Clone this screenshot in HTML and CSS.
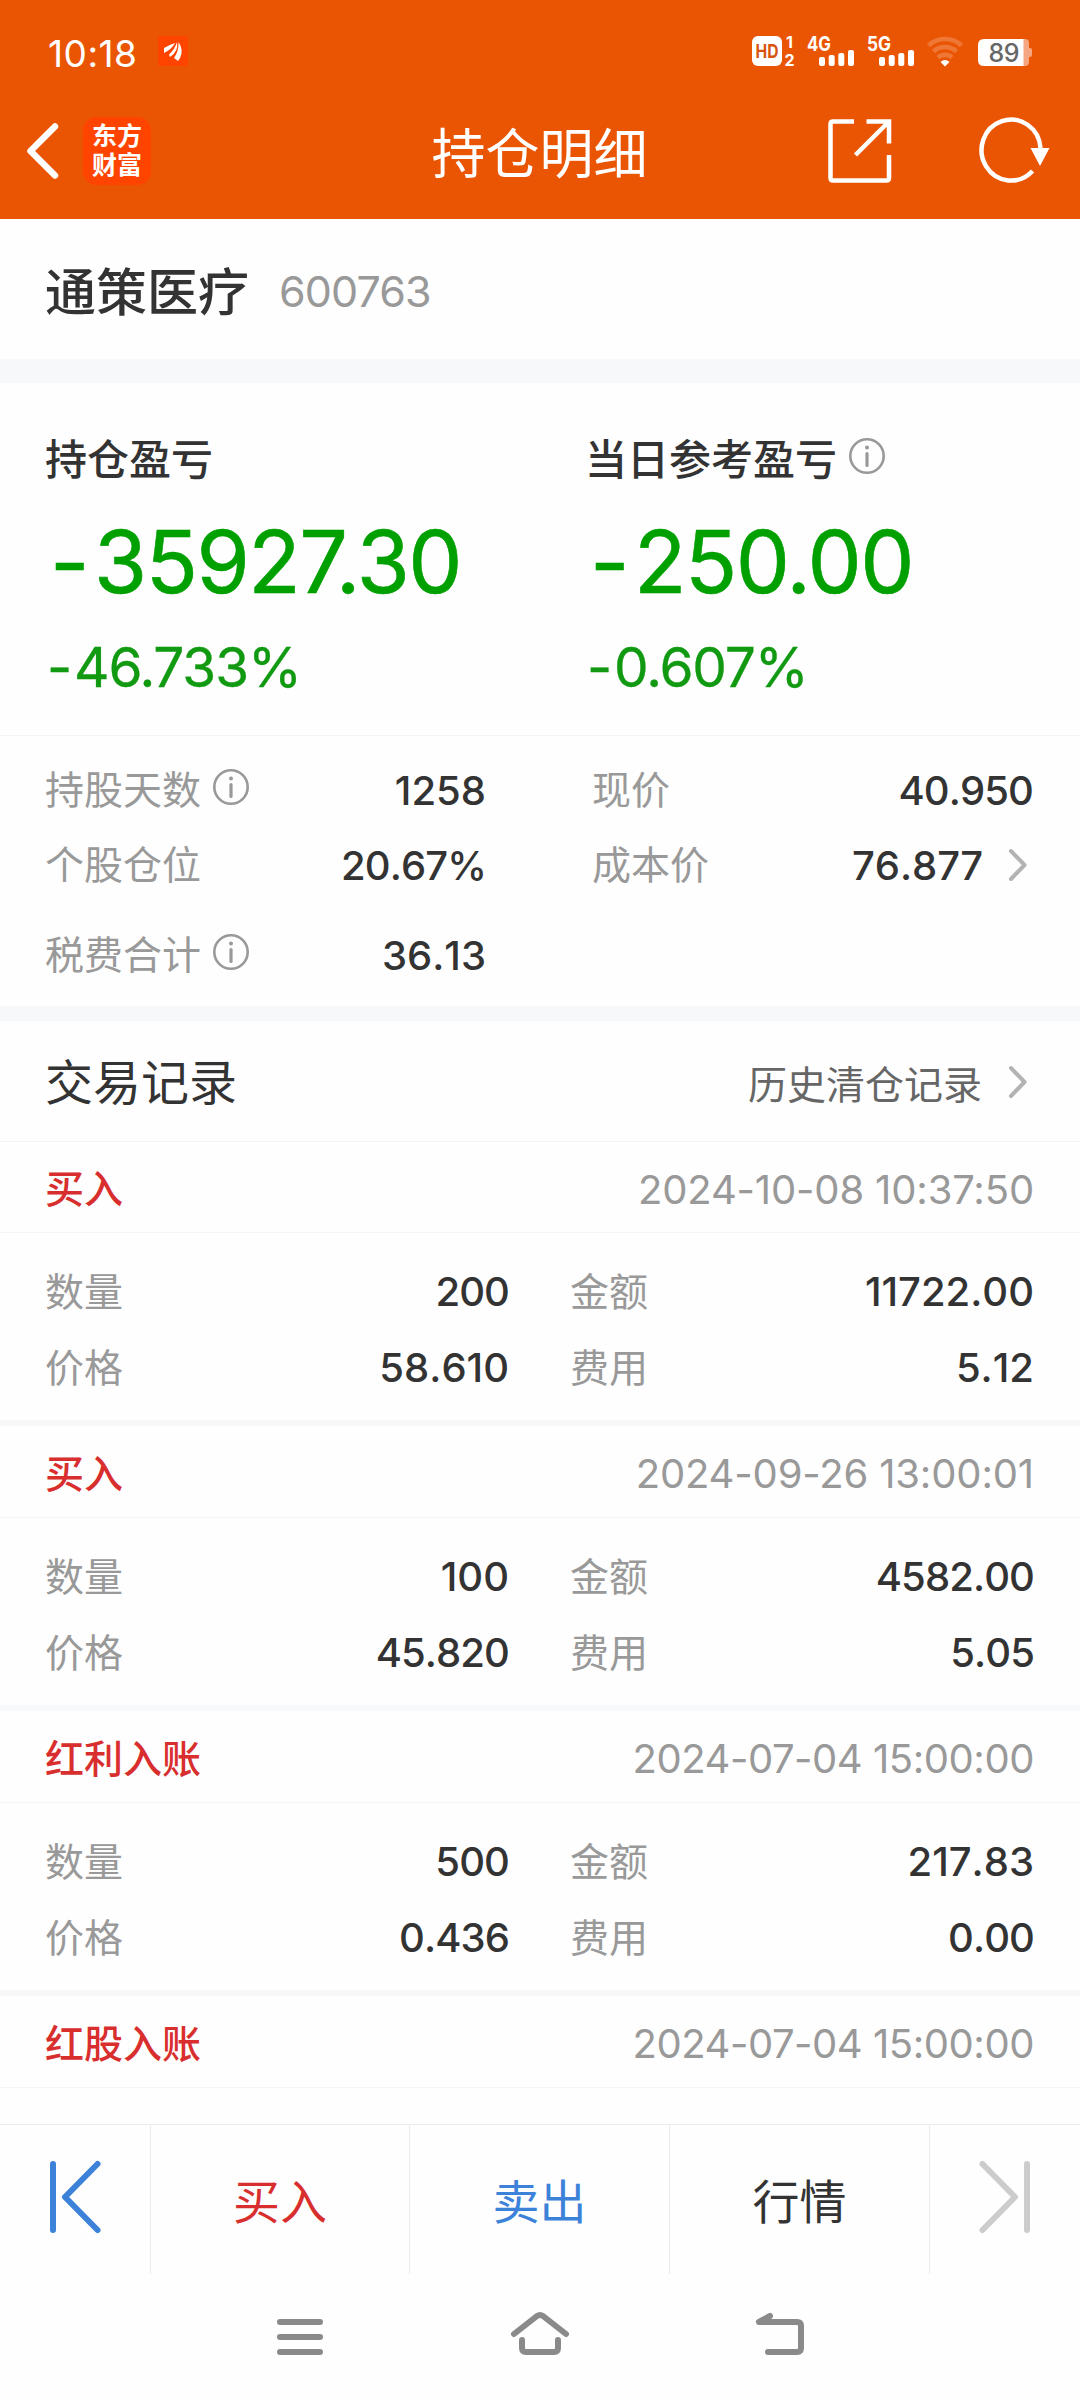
FILE: index.html
```html
<!DOCTYPE html>
<html lang="zh-CN">
<head>
<meta charset="utf-8">
<title>持仓明细</title>
<link rel="stylesheet" href="styles.css">
</head>
<body>
<div class="screen">
  <header class="top">
    <div class="status">
      <span class="clock">10:18</span>
      <svg class="app-dot" width="30" height="30" viewBox="0 0 30 30"><rect width="30" height="30" rx="3" fill="#ff4400"/><g fill="#fff"><path d="M6 12Q11 9 17 7Q14 13 6 17z"/><path d="M11 18.500Q17 13 19 6Q21 15 12 21z"/><path d="M16 22Q21 15 20.500 6Q26 14 22 22L20 25z"/></g></svg>
      <div class="status-right">
        <svg width="43" height="30" viewBox="0 0 43 30">
          <rect width="30" height="30" rx="6" fill="#fff"/>
          <text x="15" y="22" text-anchor="middle" textLength="23" lengthAdjust="spacingAndGlyphs" class="hd">HD</text>
          <text x="37.500" y="12" text-anchor="middle" class="tiny">1</text>
          <text x="37.500" y="29.500" text-anchor="middle" class="tiny">2</text>
        </svg>
        <svg class="sig" width="48" height="30" viewBox="0 0 48 30">
          <text x="0" y="15" textLength="24" lengthAdjust="spacingAndGlyphs" class="net">4G</text>
          <g fill="#fff"><rect x="12" y="21" width="6" height="9" rx="2"/><rect x="21.700" y="19" width="6" height="11" rx="2"/><rect x="31.300" y="17" width="6" height="13" rx="2"/><rect x="41" y="14" width="6" height="16" rx="2"/></g>
        </svg>
        <svg class="sig" width="48" height="30" viewBox="0 0 48 30">
          <text x="0" y="15" textLength="24" lengthAdjust="spacingAndGlyphs" class="net">5G</text>
          <g fill="#fff"><rect x="12" y="21" width="6" height="9" rx="2"/><rect x="21.700" y="19" width="6" height="11" rx="2"/><rect x="31.300" y="17" width="6" height="13" rx="2"/><rect x="41" y="14" width="6" height="16" rx="2"/></g>
        </svg>
        <svg class="wifi" width="36" height="30" viewBox="0 0 36 30">
          <g fill="none" stroke="#fff" stroke-opacity=".2" stroke-width="4.500"><path d="M1.500 9.500a24 24 0 0 1 33 0"/><path d="M6.500 15.500a17 17 0 0 1 23 0"/><path d="M11 21.500a10.500 10.500 0 0 1 14 0"/></g>
          <path d="M13.500 26q4.500-4 9 0L18 30.500z" fill="#fff"/>
        </svg>
        <svg class="batt" width="54" height="30" viewBox="0 0 54 30">
          <path d="M45 3h2q4 0 4 4v5h1q2 0 2 2v5q0 2-2 2h-1v5q0 4-4 4h-2z" fill="#f5a680"/>
          <path d="M6 3h39.500v27H6q-6 0-6-6V9q0-6 6-6z" fill="#fff"/>
          <text x="26" y="26" text-anchor="middle" textLength="31" class="level">89</text>
        </svg>
      </div>
    </div>
    <nav class="titlebar">
      <div class="title-left">
        <svg width="34" height="58" viewBox="0 0 34 58"><path d="M29 4.500L4.500 29L29 53.500" fill="none" stroke="#fff" stroke-width="6.500" stroke-linecap="round" stroke-linejoin="round"/></svg>
        <div class="brand"><span>东方</span><span>财富</span></div>
      </div>
      <h1>持仓明细</h1>
      <div class="title-right">
        <svg width="64" height="64" viewBox="0 0 64 64"><g fill="none" stroke="#fff" stroke-width="4.500"><path d="M26 2.500H5Q2.500 2.500 2.500 5V59Q2.500 61.500 5 61.500H58.500Q61 61.500 61 59V36"/><path d="M38.500 2.500H61V24.500M60 3.500L27.500 36"/></g></svg>
        <svg width="71" height="66" viewBox="0 0 71 66"><path d="M61.500 30A29.500 30.500 0 1 0 53.500 53" fill="none" stroke="#fff" stroke-width="4.500"/><path d="M51.500 30H70.500L61 48z" fill="#fff"/></svg>
      </div>
    </nav>
  </header>

  <section class="stock"><span class="stock-name">通策医疗</span><span class="stock-code">600763</span></section>

  <section class="pnl">
    <div class="pnl-col">
      <div class="pnl-label">持仓盈亏</div>
      <div class="pnl-big"><span class="sign">-</span>35927.30</div>
      <div class="pnl-pct"><span class="sign">-</span>46.733%</div>
    </div>
    <div class="pnl-col">
      <div class="pnl-label">当日参考盈亏<svg class="info" viewBox="0 0 36 36"><circle cx="18" cy="18" r="16.700"/><path d="M18 15.500V27.500"/><circle class="dot" cx="18" cy="9.500" r="2"/></svg></div>
      <div class="pnl-big"><span class="sign">-</span>250.00</div>
      <div class="pnl-pct"><span class="sign">-</span>0.607%</div>
    </div>
  </section>

  <section class="stats">
    <div class="stat"><span class="k">持股天数<svg class="info" viewBox="0 0 36 36"><circle cx="18" cy="18" r="16.700"/><path d="M18 15.500V27.500"/><circle class="dot" cx="18" cy="9.500" r="2"/></svg></span><span class="v loose">1258</span></div>
    <div class="stat"><span class="k">现价</span><span class="v">40.950</span></div>
    <div class="stat"><span class="k">个股仓位</span><span class="v">20.67%</span></div>
    <div class="stat"><span class="k">成本价</span><span class="v loose">76.877<svg class="chev" viewBox="0 0 20 34"><path d="M3 3L16.500 17L3 31"/></svg></span></div>
    <div class="stat last"><span class="k">税费合计<svg class="info" viewBox="0 0 36 36"><circle cx="18" cy="18" r="16.700"/><path d="M18 15.500V27.500"/><circle class="dot" cx="18" cy="9.500" r="2"/></svg></span><span class="v loose">36.13</span></div>
  </section>

  <section class="records">
    <div class="rec-title"><h2>交易记录</h2><span class="history">历史清仓记录<svg class="chev" viewBox="0 0 20 34"><path d="M3 3L16.500 17L3 31"/></svg></span></div>

    <article class="rec">
      <div class="rec-head"><b>买入</b><time>2024-10-08 10:37:50</time></div>
      <div class="rec-body">
        <span class="k">数量</span><span class="v">200</span><span class="k">金额</span><span class="v loose">11722.00</span>
        <span class="k">价格</span><span class="v loose">58.610</span><span class="k">费用</span><span class="v loose">5.12</span>
      </div>
    </article>
    <article class="rec">
      <div class="rec-head"><b>买入</b><time>2024-09-26 13:00:01</time></div>
      <div class="rec-body">
        <span class="k">数量</span><span class="v loose">100</span><span class="k">金额</span><span class="v">4582.00</span>
        <span class="k">价格</span><span class="v">45.820</span><span class="k">费用</span><span class="v">5.05</span>
      </div>
    </article>
    <article class="rec">
      <div class="rec-head"><b>红利入账</b><time class="tight">2024-07-04 15:00:00</time></div>
      <div class="rec-body">
        <span class="k">数量</span><span class="v">500</span><span class="k">金额</span><span class="v loose">217.83</span>
        <span class="k">价格</span><span class="v">0.436</span><span class="k">费用</span><span class="v">0.00</span>
      </div>
    </article>
    <article class="rec">
      <div class="rec-head"><b>红股入账</b><time class="tight">2024-07-04 15:00:00</time></div>
    </article>
  </section>

  <footer class="actions">
    <div class="act"><svg width="52" height="74" viewBox="0 0 52 74"><path d="M4 4V70M48.500 4L16 37L48.500 70" stroke="#3c82d9"/></svg></div>
    <div class="act buy">买入</div>
    <div class="act sell">卖出</div>
    <div class="act">行情</div>
    <div class="act"><svg width="52" height="74" viewBox="0 0 52 74"><path d="M48 4V70M3.500 4L36 37L3.500 70" stroke="#ccc"/></svg></div>
  </footer>

  <div class="sysnav">
    <svg width="46" height="44" viewBox="0 0 46 44"><path d="M3 11H43M3 26H43M3 41H43"/></svg>
    <svg width="58" height="44" viewBox="0 0 58 44"><path d="M3 23L26 5Q29 3 32 5L55 23M11 29V37Q11 41 15 41H43Q47 41 47 37V29"/></svg>
    <svg width="48" height="44" viewBox="0 0 48 44"><path d="M14 5L3 11H41Q45 11 45 15V37Q45 41 41 41H12"/></svg>
  </div>
</div>
</body>
</html>
```

FILE: styles.css
```css
* { box-sizing: border-box; }

body {
  margin: 0;
  background: #fefefe;
  color: #333;
  font-family: Inter, "Noto Sans CJK SC", sans-serif;
}

.screen {
  width: 1080px;
  height: 2400px;
  display: flex;
  flex-direction: column;
  overflow: hidden;
}

svg { display: block; flex: none; overflow: visible; }

h1, h2 { margin: 0; font-weight: 400; }

/* Header */
.top {
  height: 219px;
  background: #ea5504;
  color: #fff;
}

.status {
  display: flex;
  align-items: flex-start;
  height: 83px;
  padding: 36px 48px 0;
}

.clock {
  width: 110px;
  font-size: 37px;
  line-height: 35px;
  letter-spacing: 0.500px;
}

.status-right { display: flex; margin-left: auto; }
.status-right svg text { font-family: Inter, sans-serif; }
.hd { font-size: 19px; font-weight: 700; fill: #d9540f; }
.tiny { font-size: 16px; font-weight: 700; fill: #fff; }
.net { font-size: 20px; font-weight: 700; fill: #fff; }
.level { font-size: 25px; font-weight: 500; fill: #666; }
.sig { margin-left: 12px; }
.wifi { margin-left: 12px; }
.batt { margin-left: 15px; }

.titlebar {
  display: grid;
  grid-template-columns: 1fr auto 1fr;
  align-items: center;
  height: 136px;
  padding: 0 30px 0 26px;
}

.title-left { display: flex; align-items: center; gap: 23px; }

.brand {
  display: flex;
  flex-direction: column;
  justify-content: center;
  align-items: center;
  width: 68px;
  height: 68px;
  border-radius: 14px;
  background: #ff4400;
  font-size: 25px;
  font-weight: 700;
  line-height: 29px;
}

.titlebar h1 {
  padding: 8px 0 0 3px;
  font-size: 54px;
  line-height: 72px;
}

.title-right {
  display: flex;
  align-items: center;
  justify-content: flex-end;
  gap: 87px;
}

/* Stock name */
.stock {
  display: flex;
  align-items: center;
  gap: 30px;
  height: 140px;
  padding: 0 45px;
}

.stock-name { font-size: 51px; font-weight: 500; }
.stock-code { padding-top: 4px; font-size: 43px; color: #999; letter-spacing: -0.900px; }

/* Profit and loss */
.pnl {
  display: grid;
  grid-template-columns: 540px 540px;
  height: 376px;
  padding-top: 43px;
  border-top: 24px solid #f6f8fa;
}

.pnl-col { padding-left: 45px; }

.pnl-label {
  display: flex;
  align-items: center;
  height: 60px;
  font-size: 42px;
  font-weight: 500;
}

.pnl-big {
  height: 136px;
  font-size: 86px;
  line-height: 152px;
  letter-spacing: -1.500px;
  color: #00a000;
  -webkit-text-stroke: 0.600px #00a000;
}

.pnl-pct {
  height: 84px;
  font-size: 55px;
  line-height: 90px;
  letter-spacing: -1.200px;
  color: #119a11;
  -webkit-text-stroke: 0.300px #119a11;
}

.pnl-big .sign { margin: 0 6px 0 5px; }
.pnl-pct .sign { margin: 0 3px 0 2px; }

.info {
  width: 36px;
  height: 36px;
  margin-left: 12px;
  fill: none;
  stroke: #999;
  stroke-width: 2.600;
  stroke-linecap: round;
}

.info path { stroke-width: 3.200; }
.info .dot { fill: #999; stroke: none; }

/* Position figures */
.stats {
  display: grid;
  grid-template-columns: 441px 441px;
  grid-template-rows: 75px 75px 105px;
  column-gap: 106px;
  height: 271px;
  padding: 16px 46px 0 45px;
  border-top: 1px solid #f3f4f5;
}

.stat {
  display: flex;
  justify-content: space-between;
  align-items: center;
}

.k {
  display: flex;
  align-items: center;
  padding-bottom: 5px;
  font-size: 39px;
  color: #999;
}

.v {
  display: flex;
  align-items: center;
  padding-top: 1px;
  font-size: 40px;
  font-weight: 500;
  font-kerning: none;
  letter-spacing: -0.900px;
}

.v.loose { letter-spacing: 0; }

.chev {
  width: 20px;
  height: 34px;
  margin-left: 25px;
  margin-right: 5px;
  fill: none;
  stroke: #b3b3b3;
  stroke-width: 4;
  stroke-linecap: round;
  stroke-linejoin: round;
}

/* Trade records */
.records {
  height: 1118px;
  border-top: 15px solid #f6f8fa;
}

.rec-title {
  display: flex;
  justify-content: space-between;
  align-items: center;
  height: 120px;
  padding: 0 46px 0 45px;
}

.rec-title h2 { padding-bottom: 4px; font-size: 48px; }

.history {
  display: flex;
  align-items: center;
  padding-top: 2px;
  font-size: 39px;
  color: #666;
}

.history .chev { margin-left: 26px; margin-right: 6px; }

.rec {
  height: 285px;
  border-bottom: 6px solid #f6f8fa;
}

.rec:last-child { height: 127px; border-bottom: 0; }

.rec-head {
  display: flex;
  justify-content: space-between;
  align-items: center;
  height: 92px;
  padding: 0 46px 0 45px;
  border-bottom: 1px solid #f5f6f7;
}

.rec:first-of-type .rec-head { border-top: 1px solid #f3f4f5; }

.rec-head b {
  padding-bottom: 2px;
  font-size: 39px;
  font-weight: 500;
  color: #d92e2e;
}

.rec-head time {
  padding-top: 4px;
  font-size: 40px;
  letter-spacing: -0.150px;
  color: #999;
}

.rec-head time.tight { letter-spacing: -0.450px; }

.rec-body {
  display: grid;
  grid-template-columns: 160px 304px 160px 365px;
  grid-template-rows: 76px 76px;
  padding: 20px 46px 0 45px;
}

.rec-body .v { justify-content: flex-end; }
.rec-body .k:nth-child(4n + 3) { padding-left: 61px; }

/* Bottom actions */
.actions {
  display: grid;
  grid-template-columns: 151px 259px 260px 260px 150px;
  height: 150px;
  border-top: 1px solid #ebebeb;
}

.act {
  display: flex;
  justify-content: center;
  align-items: center;
  border-right: 1px solid #ebebeb;
  padding-bottom: 2px;
  font-size: 47px;
}

.act:last-child { border-right: 0; }
.act svg { margin-top: -3px; fill: none; stroke-width: 6; stroke-linecap: round; stroke-linejoin: round; }
.buy { color: #d92e2e; }
.sell { color: #3c82d9; }

/* System navigation */
.sysnav {
  display: flex;
  justify-content: space-between;
  height: 126px;
  padding: 37px 276px 0 277px;
}

.sysnav svg {
  fill: none;
  stroke: #8a8a8a;
  stroke-width: 6;
  stroke-linecap: round;
  stroke-linejoin: round;
}
```
